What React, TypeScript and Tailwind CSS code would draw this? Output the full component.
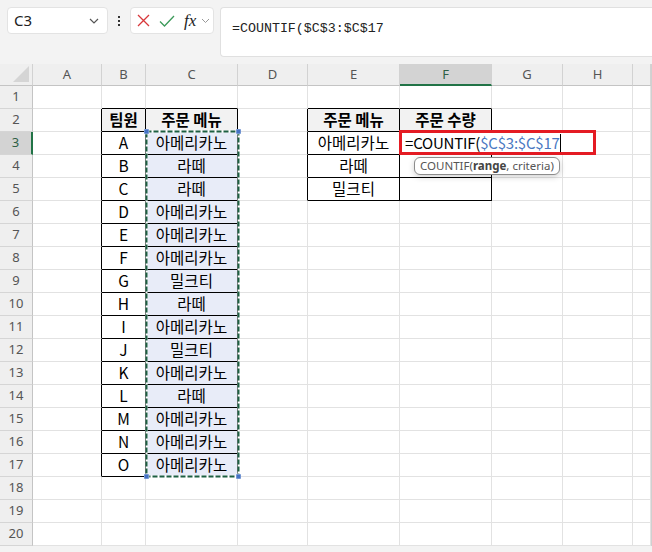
import React from 'react';

const COLS = [69, 44, 92, 70, 92, 92, 71, 70, 18];
const LETTERS = ['A', 'B', 'C', 'D', 'E', 'F', 'G', 'H', ''];

const menuC = ['아메리카노', '라떼', '라떼', '아메리카노', '아메리카노', '아메리카노', '밀크티', '라떼', '아메리카노', '밀크티', '아메리카노', '라떼', '아메리카노', '아메리카노', '아메리카노'];
const team = ['A', 'B', 'C', 'D', 'E', 'F', 'G', 'H', 'I', 'J', 'K', 'L', 'M', 'N', 'O'];
const menuE = ['아메리카노', '라떼', '밀크티'];

function content(c: number, r: number): { text: string; bold?: boolean } {
  if (c === 1) {
    if (r === 2) return { text: '팀원', bold: true };
    if (r >= 3 && r <= 17) return { text: team[r - 3] };
  }
  if (c === 2) {
    if (r === 2) return { text: '주문 메뉴', bold: true };
    if (r >= 3 && r <= 17) return { text: menuC[r - 3] };
  }
  if (c === 4) {
    if (r === 2) return { text: '주문 메뉴', bold: true };
    if (r >= 3 && r <= 5) return { text: menuE[r - 3] };
  }
  if (c === 5) {
    if (r === 2) return { text: '주문 수량', bold: true };
  }
  return { text: '' };
}

function rightBlack(c: number, r: number) {
  if (r >= 2 && r <= 17 && (c === 0 || c === 1 || c === 2)) return true;
  if (r >= 2 && r <= 5 && (c === 3 || c === 4 || c === 5)) return true;
  return false;
}
function bottomBlack(c: number, r: number) {
  if ((c === 1 || c === 2) && r >= 1 && r <= 17) return true;
  if ((c === 4 || c === 5) && r >= 1 && r <= 5) return true;
  return false;
}

function Cell({ c, r }: { c: number; r: number }) {
  const { text, bold } = content(c, r);
  const header = r === 2 && (c === 1 || c === 2 || c === 4 || c === 5);
  const sel = c === 2 && r >= 3 && r <= 17;
  return (
    <div
      className={[
        "flex items-center justify-center border-r border-b overflow-hidden whitespace-nowrap font-['Noto_Sans_CJK_KR',sans-serif] text-[15.5px] leading-none text-black",
        rightBlack(c, r) ? 'border-r-black' : 'border-r-[#e2e2e2]',
        bottomBlack(c, r) ? 'border-b-black' : 'border-b-[#e2e2e2]',
        header ? 'bg-[#f2f2f2]' : sel ? 'bg-[#e8ecf8]' : 'bg-white',
        bold ? 'font-bold' : 'font-normal',
      ].join(' ')}
    >
      {text}
    </div>
  );
}

export default function App() {
  const rows = Array.from({ length: 20 }, (_, i) => i + 1);
  return (
    <div className="relative w-[652px] h-[552px] overflow-hidden bg-[#f3f3f3] font-['Noto_Sans',sans-serif]">
      {/* Formula bar */}
      <div className="flex items-start h-[64px] pt-[7px] pl-[7px]">
        <div className="flex items-center justify-between w-[101px] h-[27px] bg-white border border-[#e3e3e3] rounded-[4px] pl-[6px] pr-[8px]">
          <span className="text-[15px] text-[#222] leading-none">C3</span>
          <svg width="10" height="6" viewBox="0 0 10 6" fill="none">
            <path d="M1 1l4 4 4-4" stroke="#555" strokeWidth="1.2" />
          </svg>
        </div>
        <div className="flex flex-col items-center justify-center gap-[2px] w-[22px] h-[27px]">
          <span className="block w-[2px] h-[2px] bg-[#333]" />
          <span className="block w-[2px] h-[2px] bg-[#333]" />
          <span className="block w-[2px] h-[2px] bg-[#333]" />
        </div>
        <div className="flex items-center w-[84px] h-[27px] bg-white border border-[#e3e3e3] rounded-[4px] pl-[6px]">
          <svg width="13" height="13" viewBox="0 0 13 13" fill="none">
            <path d="M1 1l11 11M12 1L1 12" stroke="#d8383b" strokeWidth="1.3" />
          </svg>
          <svg width="16" height="12" viewBox="0 0 16 12" fill="none" className="ml-[9px]">
            <path d="M1 6.5l4.5 4.5L15 1" stroke="#3c9a5a" strokeWidth="1.3" />
          </svg>
          <span className="ml-[9px] font-['Liberation_Serif',serif] italic text-[17px] leading-none text-[#222]">fx</span>
          <svg width="9" height="6" viewBox="0 0 9 6" fill="none" className="ml-[5px]">
            <path d="M1 1l3.5 3.5L8 1" stroke="#999" strokeWidth="1" />
          </svg>
        </div>
        <div className="ml-[6px] flex-1 h-[50px] bg-white border border-[#e0e0e0] border-r-0 rounded-l-[4px] pl-[11px] pt-[6px]">
          <span className="font-['Liberation_Mono',monospace] text-[13.3px] text-[#222]">=COUNTIF($C$3:$C$17</span>
        </div>
      </div>

      {/* Grid */}
      <div className="grid grid-cols-[33px_69px_44px_92px_70px_92px_92px_71px_70px_18px] grid-rows-[22px_repeat(20,23px)] w-[652px] border-r border-r-[#d0d0d0]">
        <div className="relative bg-[#efefef] border-r border-b border-r-[#d2d2d2] border-b-[#c4c4c4]">
          <div className="absolute right-[3px] bottom-[3px] w-0 h-0 border-l-[16px] border-l-transparent border-b-[16px] border-b-[#d5d5d5]" />
        </div>
        {LETTERS.map((l, i) => (
          <div
            key={l + i}
            className={
              i === 5
                ? 'flex items-center justify-center bg-[#d3d3d3] border-r border-r-[#d2d2d2] border-b-2 border-b-[#217346] text-[13px] text-[#2f5f45] pt-[1px]'
                : 'flex items-center justify-center bg-[#efefef] border-r border-r-[#d2d2d2] border-b border-b-[#c4c4c4] text-[13px] text-[#555]'
            }
          >
            {l}
          </div>
        ))}
        {rows.map((r) => (
          <React.Fragment key={r}>
            <div
              className={
                r === 3
                  ? 'flex items-center justify-center bg-[#d3d3d3] border-r-2 border-r-[#217346] border-b border-b-[#d5d5d5] text-[13px] text-[#2f5f45]'
                  : 'flex items-center justify-center bg-[#efefef] border-r border-r-[#c4c4c4] border-b border-b-[#d5d5d5] text-[13px] text-[#555]'
              }
            >
              {r}
            </div>
            {COLS.map((_, c) => (
              <Cell key={c} c={c} r={r} />
            ))}
          </React.Fragment>
        ))}
      </div>

      {/* Marching ants around C3:C17 */}
      <svg className="absolute left-[144px] top-[129px]" width="97" height="350" viewBox="0 0 97 350" fill="none">
        <rect x="2.5" y="2.5" width="92" height="345" stroke="#ffffff" strokeWidth="2" />
        <rect x="2.5" y="2.5" width="92" height="345" stroke="#1d5f42" strokeWidth="2" strokeDasharray="5 2" />
        <rect x="0" y="0" width="5" height="5" fill="#4472c4" stroke="white" strokeWidth="0.5" />
        <rect x="92" y="0" width="5" height="5" fill="#4472c4" stroke="white" strokeWidth="0.5" />
        <rect x="0" y="345" width="5" height="5" fill="#4472c4" stroke="white" strokeWidth="0.5" />
        <rect x="92" y="345" width="5" height="5" fill="#4472c4" stroke="white" strokeWidth="0.5" />
      </svg>

      {/* Edit box on F3 */}
      <div className="absolute left-[399px] top-[130px] w-[197px] h-[25px] border-[3px] border-[#e41b23] bg-white flex items-center pl-[3px] font-['Noto_Sans_CJK_KR',sans-serif] text-[15px] tracking-[-0.2px] leading-none whitespace-nowrap">
        <span className="text-black">=COUNTIF(</span>
        <span className="text-[#4a78c2]">$C$3:$C$17</span>
        <span className="w-[1px] h-[18px] bg-black" />
      </div>

      {/* Tooltip */}
      <div className="absolute left-[414px] top-[157px] h-[18px] px-[5px] flex items-center rounded-[6px] border border-[#8c8c8c] bg-white shadow-[0_2px_6px_rgba(0,0,0,0.18)] text-[11.5px] leading-none text-[#555] whitespace-nowrap">
        COUNTIF(<span className="font-bold text-[#444]">range</span>, criteria)
      </div>
    </div>
  );
}
